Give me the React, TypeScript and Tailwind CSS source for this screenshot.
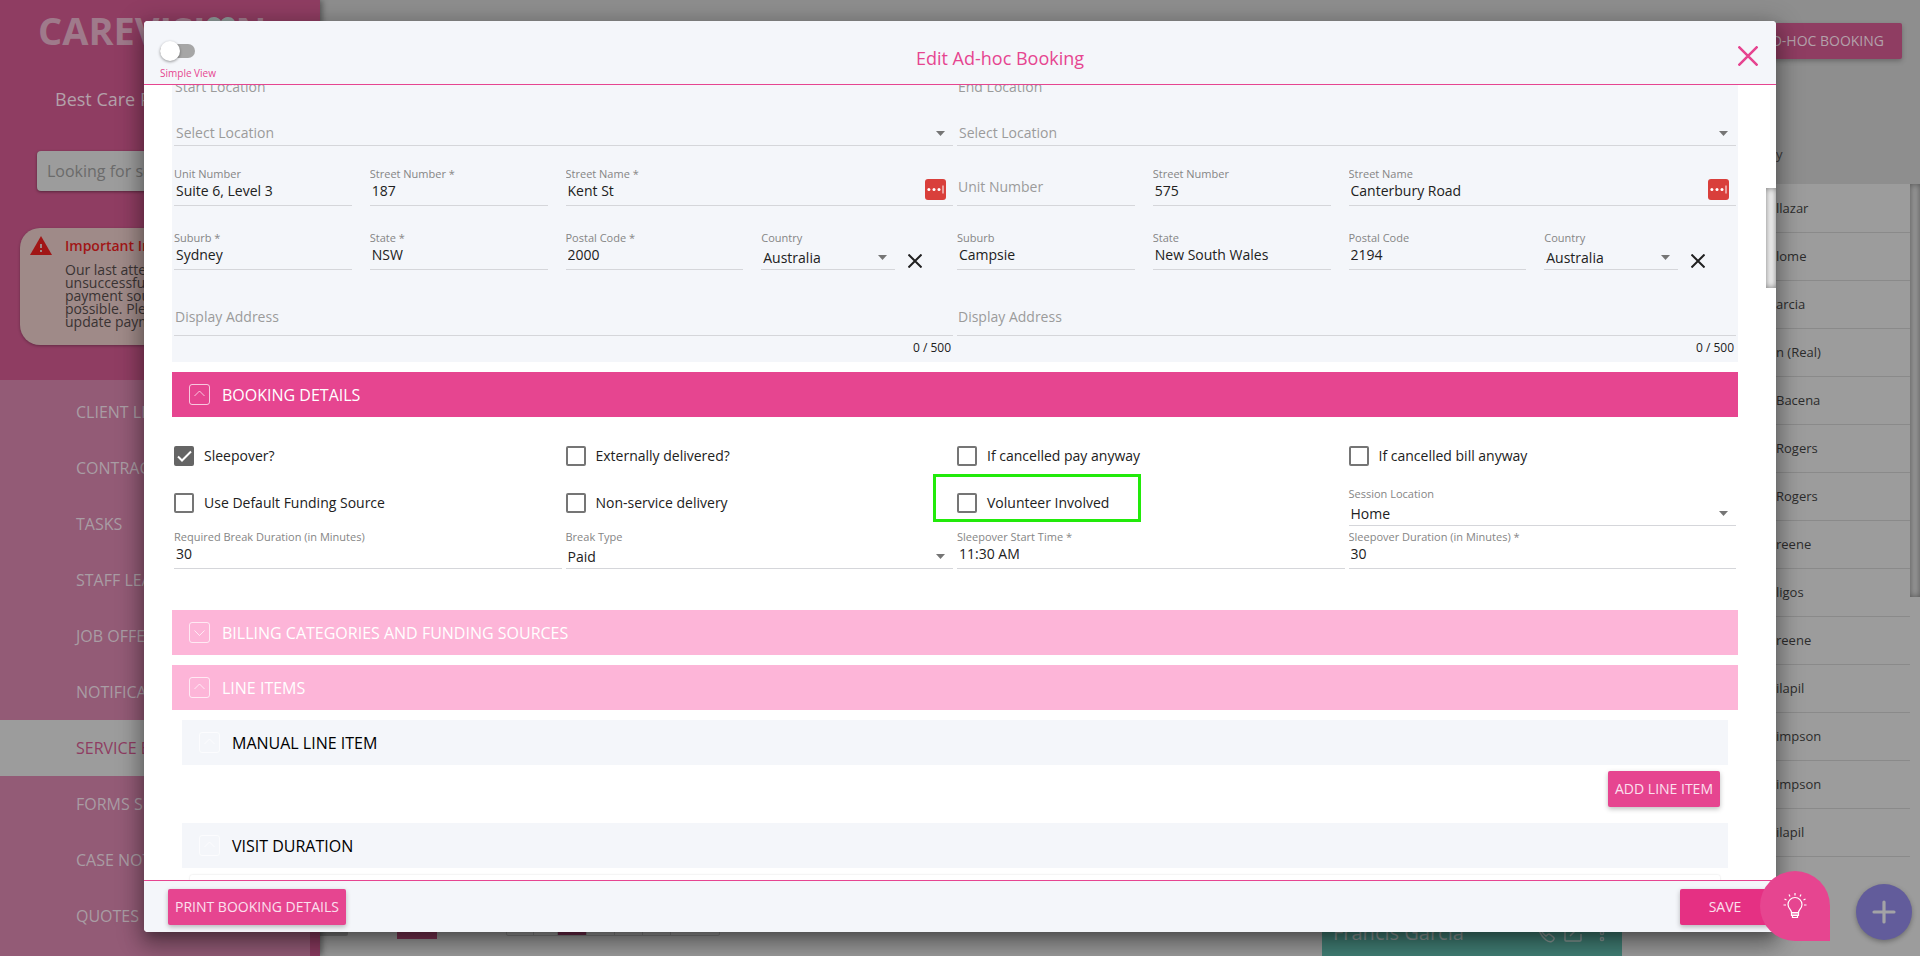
import type { ReactNode } from "react"

const NAV = [
  "CLIENT LIST",
  "CONTRACTS",
  "TASKS",
  "STAFF LEAVE",
  "JOB OFFERS",
  "NOTIFICATIONS",
  "SERVICE BOOKINGS",
  "FORMS SUBMITTED",
  "CASE NOTES",
  "QUOTES",
]

const NAMES = [
  "llazar",
  "lome",
  "arcia",
  "n (Real)",
  "Bacena",
  "Rogers",
  "Rogers",
  "reene",
  "ligos",
  "reene",
  "ilapil",
  "impson",
  "impson",
  "ilapil",
]

type FieldProps = {
  id: string
  label: string
  value?: string
  wide?: boolean
  children?: ReactNode
}

function Caret() {
  return (
    <svg className="pointer-events-none absolute right-2 bottom-2.5" width="9" height="5" viewBox="0 0 9 5">
      <path d="M0 0h9L4.5 5z" fill="#757575" />
    </svg>
  )
}

function TextField({ id, label, value, wide, children }: FieldProps) {
  return (
    <div className={wide ? "relative mx-[2px] h-[39px] border-b border-[#d5d6da]" : "relative ml-[2px] mr-4 h-[39px] border-b border-[#d5d6da]"}>
      <label htmlFor={id} className="block h-3.5 truncate text-[11px] leading-[14px] text-[#858585]">
        {label}
      </label>
      <input id={id} defaultValue={value} className="block h-5 w-full bg-transparent pl-[2px] text-sm text-[#212121] outline-none" />
      {children}
    </div>
  )
}

// Empty field: the label still sits inside the box
function EmptyField({ id, label, wide }: FieldProps) {
  return (
    <div className={wide ? "mx-[2px]" : "ml-[2px] mr-4"}>
      <input
        id={id}
        aria-label={label}
        placeholder={label}
        className="block h-[39px] w-full border-b border-[#d5d6da] bg-transparent pl-px text-sm outline-none placeholder:text-[#9b9b9b]"
      />
    </div>
  )
}

function SelectField({ id, label, value }: FieldProps) {
  return (
    <div className="relative mx-[2px] h-[39px] flex-1">
      <label htmlFor={id} className="block h-3.5 text-[11px] leading-[14px] text-[#858585]">
        {label}
      </label>
      <select id={id} className="block h-[25px] w-full appearance-none border-b border-[#d5d6da] bg-transparent pt-0.5 pl-[2px] text-sm text-[#212121] outline-none">
        <option>{value}</option>
      </select>
      <Caret />
    </div>
  )
}

function FillBadge() {
  return (
    <svg className="absolute right-[7px] bottom-[5px]" width="21" height="21" viewBox="0 0 21 21">
      <rect width="21" height="21" rx="3" fill="#d93f3b" />
      <circle cx="3.9" cy="10.5" r="1.5" fill="#fff" />
      <circle cx="9" cy="10.5" r="1.5" fill="#fff" />
      <circle cx="14" cy="10.5" r="1.5" fill="#fff" />
      <path d="M18 6.5v8" stroke="#fff" strokeWidth="1" />
    </svg>
  )
}

type AddressProps = {
  side: string
  unit?: string
  street: string
  streetName: string
  suburb: string
  state: string
  postal: string
  required?: boolean
}

function Address({ side, unit, street, streetName, suburb, state, postal, required }: AddressProps) {
  const star = required ? " *" : ""
  return (
    <div>
      <label htmlFor={`${side}-location`} className="block h-5 pl-[3px] text-sm leading-5 text-[#9b9b9b]">
        {side} Location
      </label>
      <div className="relative mx-[2px] mt-[23px]">
        <select id={`${side}-location`} className="block h-[26px] w-full appearance-none border-b border-[#d5d6da] bg-transparent pl-[2px] text-sm text-[#9b9b9b] outline-none">
          <option>Select Location</option>
        </select>
        <Caret />
      </div>

      <div className="mt-[21px] grid grid-cols-4">
        {unit ? (
          <TextField id={`${side}-unit`} label="Unit Number" value={unit} />
        ) : (
          <EmptyField id={`${side}-unit`} label="Unit Number" />
        )}
        <TextField id={`${side}-number`} label={`Street Number${star}`} value={street} />
        <div className="col-span-2">
          <TextField id={`${side}-street`} label={`Street Name${star}`} value={streetName} wide>
            <FillBadge />
          </TextField>
        </div>
      </div>

      <div className="mt-[25px] grid grid-cols-4">
        <TextField id={`${side}-suburb`} label={`Suburb${star}`} value={suburb} />
        <TextField id={`${side}-state`} label={`State${star}`} value={state} />
        <TextField id={`${side}-postal`} label={`Postal Code${star}`} value={postal} />
        <div className="flex items-end pr-[33px]">
          <SelectField id={`${side}-country`} label="Country" value="Australia" />
          <button aria-label="Clear address" className="mb-[2px] ml-[11px]">
            <svg width="14" height="14" viewBox="0 0 14 14">
              <path d="M.5.5l13 13M13.5.5l-13 13" stroke="#212121" strokeWidth="2" />
            </svg>
          </button>
        </div>
      </div>

      <div className="mt-[27px]">
        <EmptyField id={`${side}-display`} label="Display Address" wide />
      </div>
      <p className="pr-1 text-right text-xs leading-6 text-[#212121]">0 / 500</p>
    </div>
  )
}

function CheckField({ label, checked }: { label: string; checked?: boolean }) {
  return (
    <label className="relative flex h-8 w-fit items-center gap-2.5 pl-[2px] text-sm text-[#212121]">
      <input
        type="checkbox"
        defaultChecked={checked}
        className="peer size-5 appearance-none rounded-xs border-2 border-[#757575] checked:border-[#656565] checked:bg-[#656565]"
      />
      <svg className="pointer-events-none absolute left-[2px] hidden peer-checked:block" width="20" height="20" viewBox="0 0 20 20">
        <path d="M4 10.5l4 4 9-9" fill="none" stroke="#fff" strokeWidth="2" />
      </svg>
      {label}
    </label>
  )
}

function SectionBar({ title, tone, down }: { title: string; tone: string; down?: boolean }) {
  return (
    <button className={`mt-2.5 flex h-[45px] w-full items-center gap-3 pl-[17px] text-left text-base ${tone}`}>
      <svg width="21" height="21" viewBox="0 0 21 21" fill="none" stroke="#fff" strokeOpacity=".7">
        <rect x=".5" y=".5" width="20" height="20" rx="2.5" />
        <path d={down ? "M5.5 8.5l5 5 5-5" : "M5.5 12l5-5 5 5"} />
      </svg>
      {title}
    </button>
  )
}

const raised = "rounded-xs text-sm font-medium shadow-[0_2px_5px_rgba(0,0,0,0.26)]"

function Sidebar() {
  return (
    <aside className="relative z-10 flex w-80 shrink-0 flex-col bg-[#8f3d62] shadow-[2px_0_6px_rgba(0,0,0,0.4)]">
      <div className="h-[380px] shrink-0">
        <div className="flex items-center pt-[3px] pl-[38px] text-[38px] leading-[54px] font-bold text-[#9f7a8b]">
          CAREVISI
          <svg width="30" height="27" viewBox="0 0 30 27">
            <path d="M15 27L3 14C-2 8 1 0 8 0c3 0 6 2 7 4 1-2 4-4 7-4 7 0 10 8 5 14z" fill="#8e9a98" />
          </svg>
          N
        </div>
        <p className="mt-7 pl-[55px] text-lg leading-7 whitespace-nowrap text-[#b3a1aa]">Best Care Provider</p>
        <input
          aria-label="Search"
          placeholder="Looking for something?"
          className="mt-[38px] ml-[37px] h-10 w-[246px] rounded-sm bg-[#9c9c9c] pl-2.5 text-base shadow-[0_1px_3px_rgba(0,0,0,0.4)] placeholder:text-[#6b6b6b]"
        />
        <div className="mt-[37px] ml-5 flex h-[117px] w-[280px] gap-[13px] rounded-[20px] bg-[#9f8a88] pt-2 pl-2.5 shadow-[0_1px_3px_rgba(0,0,0,0.3)]">
          <svg className="shrink-0" width="22" height="19" viewBox="0 0 22 19">
            <path d="M11 0l11 19H0z" fill="#a11616" />
            <path d="M10 8h2v4h-2zM10 14h2v2h-2z" fill="#9f8a88" />
          </svg>
          <div className="text-sm">
            <p className="font-semibold text-[#a11616]">Important Information</p>
            <p className="mt-[7px] leading-[13px] whitespace-nowrap text-[#3a3333]">
              Our last attempt was
              <br />
              unsuccessful. Your
              <br />
              payment source as soon
              <br />
              possible. Please
              <br />
              update payment
            </p>
          </div>
        </div>
      </div>
      <nav className="relative min-h-0 flex-1 overflow-hidden bg-[#935b76] pt-1">
        {NAV.map((item) => (
          <a
            key={item}
            href="#"
            className={
              item.startsWith("SERVICE")
                ? "flex h-14 items-center bg-[#9c9c9c] pl-19 text-base text-[#8f3d62]"
                : "flex h-14 items-center pl-19 text-base text-[#a99da4]"
            }
          >
            {item}
          </a>
        ))}
        <div className="absolute right-0 bottom-0 h-40 w-2.5 bg-[#8a3a5f]" />
      </nav>
    </aside>
  )
}

function BackPage() {
  return (
    <main className="relative flex min-w-0 flex-1 flex-col bg-[#9c9c9c]">
      <div className="flex h-[184px] shrink-0 flex-col items-end justify-between bg-[#8e8e8e] pt-[23px] pb-5">
        <button className={`mr-[18px] h-9 bg-[#8f3d62] px-[18px] text-[#b3a1aa] ${raised}`}>NEW AD-HOC BOOKING</button>
        <span className="w-[144px] text-[13px] text-[#3c3c3c]">y</span>
      </div>
      <table className="mr-2.5 border-collapse text-[13px] text-[#2c2c2c]">
        <tbody>
          {NAMES.map((name, i) => (
            <tr key={i} className="h-12 border-b border-[#8a8a8a]">
              <td />
              <td className="w-[134px] pt-0.5">{name}</td>
            </tr>
          ))}
        </tbody>
      </table>
      <div className="flex items-start pt-[62px]">
        <div className="h-[17px] w-7 rounded-br-xs bg-[#7b7b7b]" />
        <div className="ml-[49px] h-5 w-10 bg-[#7f3556]" />
        <div className="ml-[69px] flex h-[17px] w-[214px] divide-x divide-[#858585] rounded-b-xs border border-[#858585]">
          <div className="w-[27px]" />
          <div className="w-6" />
          <div className="w-[29px] bg-[#6f2a4a]" />
          <div className="w-7" />
          <div className="w-7" />
          <div className="w-7" />
          <div className="w-6" />
        </div>
      </div>
      <div className="absolute top-[184px] right-0 h-[413px] w-2.5 bg-[#959595] shadow-[inset_0_0_6px_rgba(0,0,0,0.45)]" />
    </main>
  )
}

function ChatCard() {
  return (
    <div className="absolute right-[298px] bottom-0 flex h-[46px] w-[300px] items-center bg-[#417f75] pl-[11px] text-xl text-[#8d9a98]">
      <span className="flex-1 leading-[30px]">Francis Garcia</span>
      <svg width="72" height="20" viewBox="0 0 72 20" fill="none" stroke="currentColor" strokeWidth="1.5">
        <path d="M2 1C0 4 5 13 10 17c4 3 7 2 8-1 1-1-3-4-5-5-2 0-2 2-3 2C8 12 5 8 5 6c0-1 2-2 1-3S3 0 2 1z" />
        <path d="M36 2h-6q-1 0-1 1v14q0 1 1 1h14q1 0 1-1v-6M34 13L45 2M39 1h7v7" />
        <circle cx="66" cy="3" r="1.6" />
        <circle cx="66" cy="10" r="1.6" />
        <circle cx="66" cy="16" r="1.6" />
      </svg>
      <span className="w-3.5" />
    </div>
  )
}

function BookingDialog() {
  return (
    <div
      role="dialog"
      aria-label="Edit Ad-hoc Booking"
      className="absolute inset-x-[7.5%] top-[21px] bottom-6 z-20 flex flex-col overflow-hidden rounded bg-white shadow-[0_7px_8px_-4px_rgba(0,0,0,0.2),0_13px_19px_2px_rgba(0,0,0,0.2),0_5px_24px_4px_rgba(0,0,0,0.25)]"
    >
      <header className="flex h-16 shrink-0 border-b border-[#e64590] bg-[#f4f6fa] text-[#e64590]">
        <label className="w-20 pt-5 pl-4 text-[10px] whitespace-nowrap">
          <input type="checkbox" className="peer sr-only" />
          <span className="relative flex h-5 w-9 items-center">
            <span className="h-3.5 w-[35px] rounded-full bg-[#a6a6a6]" />
            <span className="absolute left-0 size-5 rounded-full bg-white shadow-[0_1px_3px_rgba(0,0,0,0.4)]" />
          </span>
          <span className="block pt-[3px] leading-[18px]">Simple View</span>
        </label>
        <h2 className="flex-1 pt-[23px] text-center text-lg leading-7">Edit Ad-hoc Booking</h2>
        <button aria-label="Close" className="absolute top-[25px] right-[18px]">
          <svg width="20" height="20" viewBox="0 0 20 20">
            <path d="M.5.5l19 19M19.5.5l-19 19" stroke="#e64590" strokeWidth="2.5" />
          </svg>
        </button>
      </header>

      <div className="relative min-h-0 flex-1 overflow-hidden pr-[38px] pl-7">
        <div className="-mt-2 grid grid-cols-2 bg-[#f4f6fa] pb-[2px]">
          <Address
            side="Start"
            unit="Suite 6, Level 3"
            street="187"
            streetName="Kent St"
            suburb="Sydney"
            state="NSW"
            postal="2000"
            required
          />
          <Address side="End" street="575" streetName="Canterbury Road" suburb="Campsie" state="New South Wales" postal="2194" />
        </div>

        <SectionBar title="BOOKING DETAILS" tone="bg-[#e64590] text-white" />
        <div className="grid grid-cols-4 pt-[23px] pb-[31px]">
          <CheckField label="Sleepover?" checked />
          <CheckField label="Externally delivered?" />
          <CheckField label="If cancelled pay anyway" />
          <CheckField label="If cancelled bill anyway" />
          <div className="pt-[15px]">
            <CheckField label="Use Default Funding Source" />
          </div>
          <div className="pt-[15px]">
            <CheckField label="Non-service delivery" />
          </div>
          <div className="relative pt-[15px]">
            <CheckField label="Volunteer Involved" />
            <div className="pointer-events-none absolute top-0.5 -left-[22px] h-12 w-[208px] border-3 border-[#22ea0a]" />
          </div>
          <div className="pt-[15px]">
            <SelectField id="session" label="Session Location" value="Home" />
          </div>
          <div className="pt-1">
            <TextField id="break" label="Required Break Duration (in Minutes)" value="30" wide />
          </div>
          <div className="pt-1">
            <SelectField id="breaktype" label="Break Type" value="Paid" />
          </div>
          <div className="pt-1">
            <TextField id="sleepstart" label="Sleepover Start Time *" value="11:30 AM" wide />
          </div>
          <div className="pt-1">
            <TextField id="sleepdur" label="Sleepover Duration (in Minutes) *" value="30" wide />
          </div>
        </div>

        <SectionBar title="BILLING CATEGORIES AND FUNDING SOURCES" tone="bg-[#fdb5d8] text-white" down />
        <SectionBar title="LINE ITEMS" tone="bg-[#fdb5d8] text-white" />
        <div className="mx-2.5">
          <SectionBar title="MANUAL LINE ITEM" tone="bg-[#f4f6fa] text-black" />
          <div className="flex justify-end px-2 py-1.5">
            <button className={`h-9 bg-[#e64590] px-[7px] text-[#fbe0ee] ${raised}`}>ADD LINE ITEM</button>
          </div>
          <SectionBar title="VISIT DURATION" tone="bg-[#f4f6fa] text-black" />
          <div className="mx-2 mt-[7px] h-20 rounded-xs shadow-[0_0_2px_rgba(0,0,0,0.15)]" />
        </div>
        <div className="absolute top-[103px] right-0 h-[100px] w-2.5 bg-[#f2f2f2] shadow-[inset_0_0_6px_rgba(0,0,0,0.5)]" />
      </div>

      <footer className="flex h-[52px] shrink-0 items-center justify-between border-t border-[#e64590] bg-[#f4f6fa] pr-1.5 pl-6">
        <button className={`h-9 bg-[#e64590] px-[7px] text-[#fbe0ee] ${raised}`}>PRINT BOOKING DETAILS</button>
        <button className={`h-9 w-[90px] bg-[#e53083] text-[#fbe0ee] ${raised}`}>SAVE</button>
      </footer>
    </div>
  )
}

export default function App() {
  return (
    <div className="relative flex h-screen overflow-hidden bg-[#9c9c9c] font-['Open_Sans',sans-serif]">
      <Sidebar />
      <BackPage />
      <ChatCard />
      <BookingDialog />

      {/* floating buttons */}
      <button
        aria-label="Tips"
        className="absolute right-[90px] bottom-[15px] z-30 flex size-[70px] items-center justify-center rounded-full rounded-br-lg bg-[#e64590]"
      >
        <svg width="24" height="26" viewBox="0 0 24 26" fill="none" stroke="#fff" strokeWidth="1.2">
          <path d="M8.5 19.5c0-3-3.5-4-3.5-8a7 7 0 0 1 14 0c0 4-3.5 5-3.5 8z" />
          <path d="M8.5 19.5v3h7v-3M8.5 21h7M9.5 22.5v2h5v-2" />
          <path d="M12 0v2.5M6 1.5l1 2M18 1.5l-1 2M1.5 6l2 1M22.5 6l-2 1M.5 12H3M21 12h2.5" />
        </svg>
      </button>
      <button
        aria-label="Add"
        className="absolute right-2 bottom-4 z-10 flex size-14 items-center justify-center rounded-full bg-[#625c9b] shadow-[0_2px_5px_rgba(0,0,0,0.3)]"
      >
        <svg width="24" height="24" viewBox="0 0 24 24">
          <path d="M12 2v20M2 12h20" stroke="#a3a3a6" strokeWidth="3.2" strokeLinecap="round" />
        </svg>
      </button>
    </div>
  )
}
